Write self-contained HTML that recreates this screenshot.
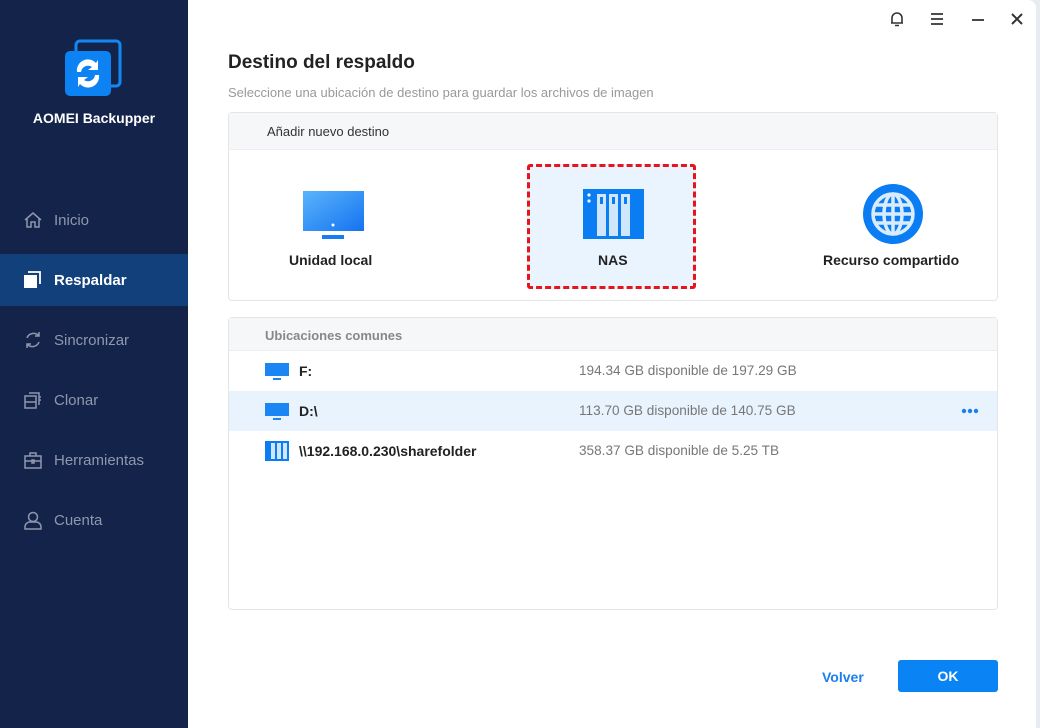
<!DOCTYPE html>
<html><head><meta charset="utf-8"><style>
*{margin:0;padding:0;box-sizing:border-box}
body{width:1040px;height:728px;overflow:hidden;background:#e8ebef;font-family:"Liberation Sans",sans-serif;position:relative}
#win{position:absolute;left:0;top:0;width:1036px;height:728px;background:#fff;border-radius:0 8px 0 0}
#side{position:absolute;left:0;top:0;width:188px;height:728px;background:#14234a}
.nav{position:absolute;left:0;width:188px;height:52px;display:flex;align-items:center;color:#8e98ad;font-size:15px}
.nav svg{position:absolute;left:23px}
.nav span{position:absolute;left:54px}
.nav.act{background:#11407b;color:#fff;font-weight:bold}
.t{position:absolute}
.box{position:absolute;left:228px;width:770px;border:1px solid #e3e5e9;border-radius:4px;background:#fff}
.hd{background:#f6f7f9;height:37px;border-bottom:1px solid #eceef1;font-size:14px;color:#333;padding:11px 0 0 38px}
.row{position:absolute;left:0;width:768px;height:40px;font-size:13.6px}
.row .n{position:absolute;left:70px;top:12px;color:#222;font-weight:bold;font-size:14px}
.row .s{position:absolute;left:350px;top:12px;color:#777}
</style></head><body>
<div id="win">
<div id="side">
 <svg style="position:absolute;left:64px;top:39px" width="60" height="58" viewBox="0 0 60 58">
  <rect x="12" y="2" width="44" height="45" rx="4" fill="none" stroke="#1388f5" stroke-width="3"/>
  <rect x="1" y="12" width="46" height="45" rx="5" fill="#0d82f2"/>
  <path d="M13 33a11 11 0 0 1 19-9l2-3v10h-10l4-3a7 7 0 0 0-11 5z" fill="#fff"/>
  <path d="M35 36a11 11 0 0 1-19 9l-2 3v-10h10l-4 3a7 7 0 0 0 11-5z" fill="#fff"/>
 </svg>
 <div class="t" style="left:0;width:188px;top:110px;text-align:center;color:#fff;font-weight:bold;font-size:14px">AOMEI Backupper</div>
 <div class="nav" style="top:194px"><svg width="20" height="20" viewBox="0 0 20 20" fill="none" stroke="#8e98ad" stroke-width="1.5"><path d="M2 10L10 3l8 7M4 8v9h4v-5h4v5h4V8"/></svg><span>Inicio</span></div>
 <div class="nav act" style="top:254px"><svg width="20" height="20" viewBox="0 0 20 20"><rect x="1" y="5" width="13" height="13" fill="#fff"/><path d="M5 2h12v12" fill="none" stroke="#fff" stroke-width="1.8"/></svg><span>Respaldar</span></div>
 <div class="nav" style="top:314px"><svg width="20" height="20" viewBox="0 0 20 20" fill="none" stroke="#8e98ad" stroke-width="1.5"><path d="M4 8a7 7 0 0 1 12-2M16 12a7 7 0 0 1-12 2M16 2v4h-4M4 18v-4h4"/></svg><span>Sincronizar</span></div>
 <div class="nav" style="top:374px"><svg width="20" height="20" viewBox="0 0 20 20" fill="none" stroke="#8e98ad" stroke-width="1.5"><rect x="2" y="6" width="11" height="12"/><path d="M2 12h11M6 3h10v12M16 7h2M16 10h2"/></svg><span>Clonar</span></div>
 <div class="nav" style="top:434px"><svg width="20" height="20" viewBox="0 0 20 20" fill="none" stroke="#8e98ad" stroke-width="1.5"><rect x="2" y="6" width="16" height="12"/><path d="M7 6V3h6v3M2 11h16M9 10h2v3H9z"/></svg><span>Herramientas</span></div>
 <div class="nav" style="top:494px"><svg width="20" height="20" viewBox="0 0 20 20" fill="none" stroke="#8e98ad" stroke-width="1.5"><circle cx="10" cy="7" r="4.5"/><path d="M2 19v-2a5 5 0 0 1 5-5h6a5 5 0 0 1 5 5v2z"/></svg><span>Cuenta</span></div>
</div>
<svg style="position:absolute;left:889px;top:11px" width="16" height="16" viewBox="0 0 16 16" fill="none" stroke="#333" stroke-width="1.6"><path d="M3 12V7a5 5 0 0 1 10 0v5zM2 12h12M6 14.5h4"/></svg>
<svg style="position:absolute;left:929px;top:12px" width="16" height="14" viewBox="0 0 16 14" stroke="#333" stroke-width="1.8"><path d="M2 2h12M2 7h12M2 12h12"/></svg>
<svg style="position:absolute;left:970px;top:12px" width="16" height="14" stroke="#333" stroke-width="1.8"><path d="M2 8h12"/></svg>
<svg style="position:absolute;left:1010px;top:12px" width="14" height="14" stroke="#333" stroke-width="2"><path d="M2 2l10 10M12 2L2 12"/></svg>
<div class="t" style="left:228px;top:52px;font-size:19px;font-weight:bold;color:#222">Destino del respaldo</div>
<div class="t" style="left:228px;top:85px;font-size:13px;color:#999">Seleccione una ubicación de destino para guardar los archivos de imagen</div>
<div class="box" style="top:112px;height:189px">
 <div class="hd" style="font-size:13px">Añadir nuevo destino</div>
 <svg style="position:absolute;left:74px;top:78px" width="61" height="50" viewBox="0 0 61 50"><defs><linearGradient id="g" x1="0" y1="0" x2="1" y2="1"><stop offset="0" stop-color="#5ab4fb"/><stop offset="1" stop-color="#1473f0"/></linearGradient></defs><rect x="0" y="0" width="61" height="40" fill="url(#g)"/><circle cx="30" cy="34" r="1.5" fill="#fff"/><rect x="19" y="44" width="22" height="4" fill="#1a7cf2"/></svg>
 <div class="t" style="left:60px;top:139px;font-size:14px;font-weight:bold;color:#222">Unidad local</div>
 <div style="position:absolute;left:298px;top:51px;width:169px;height:125px;background:#eaf4fe;border:3px dashed #e8141c;border-radius:3px"></div>
 <svg style="position:absolute;left:354px;top:76px" width="61" height="50" viewBox="0 0 61 50"><rect width="61" height="50" fill="#0a7df2"/><circle cx="6" cy="6" r="1.6" fill="#fff"/><circle cx="6" cy="12" r="1.6" fill="#fff"/><rect x="14" y="5" width="9" height="42" fill="#cfe6fd"/><rect x="26" y="5" width="9" height="42" fill="#cfe6fd"/><rect x="38" y="5" width="9" height="42" fill="#cfe6fd"/><rect x="17" y="8" width="3" height="7" fill="#0a7df2"/><rect x="29" y="8" width="3" height="7" fill="#0a7df2"/><rect x="41" y="8" width="3" height="7" fill="#0a7df2"/></svg>
 <div class="t" style="left:369px;top:139px;font-size:14px;font-weight:bold;color:#222">NAS</div>
 <svg style="position:absolute;left:634px;top:71px" width="60" height="60" viewBox="0 0 60 60"><circle cx="30" cy="30" r="30" fill="#0a7df2"/><g fill="none" stroke="#d8ecfe" stroke-width="3.5"><circle cx="30" cy="30" r="20"/><ellipse cx="30" cy="30" rx="9" ry="20"/><path d="M30 10v40M10 30h40M13 21h34M13 39h34"/></g></svg>
 <div class="t" style="left:594px;top:139px;font-size:14px;font-weight:bold;color:#222">Recurso compartido</div>
</div>
<div class="box" style="top:317px;height:293px">
 <div class="hd" style="color:#888;font-weight:bold;font-size:13px;padding-left:36px;height:33px;padding-top:10px">Ubicaciones comunes</div>
 <div class="row" style="top:33px"><svg style="position:absolute;left:36px;top:12px" width="24" height="17"><rect width="24" height="13" fill="#1b86f3"/><rect x="8" y="15" width="8" height="2" fill="#1b86f3"/></svg><div class="n">F:</div><div class="s">194.34 GB disponible de 197.29 GB</div></div>
 <div class="row" style="top:73px;background:#e9f3fe"><svg style="position:absolute;left:36px;top:12px" width="24" height="17"><rect width="24" height="13" fill="#1b86f3"/><rect x="8" y="15" width="8" height="2" fill="#1b86f3"/></svg><div class="n">D:\</div><div class="s">113.70 GB disponible de 140.75 GB</div><svg style="position:absolute;left:732px;top:17px" width="18" height="6"><circle cx="3" cy="3" r="2.2" fill="#1b7ef0"/><circle cx="9" cy="3" r="2.2" fill="#1b7ef0"/><circle cx="15" cy="3" r="2.2" fill="#1b7ef0"/></svg></div>
 <div class="row" style="top:113px"><svg style="position:absolute;left:36px;top:10px" width="24" height="20"><rect width="24" height="20" fill="#0a7df2"/><rect x="6" y="2" width="4" height="16" fill="#cfe6fd"/><rect x="12" y="2" width="4" height="16" fill="#cfe6fd"/><rect x="18" y="2" width="4" height="16" fill="#cfe6fd"/></svg><div class="n">\\192.168.0.230\sharefolder</div><div class="s">358.37 GB disponible de 5.25 TB</div></div>
</div>
<div class="t" style="left:822px;top:669px;color:#1b7ef0;font-weight:bold;font-size:14px">Volver</div>
<div style="position:absolute;left:898px;top:660px;width:100px;height:32px;background:#0a84f5;border-radius:3px;color:#fff;font-weight:bold;font-size:14px;text-align:center;line-height:32px">OK</div>
</div>
</body></html>
